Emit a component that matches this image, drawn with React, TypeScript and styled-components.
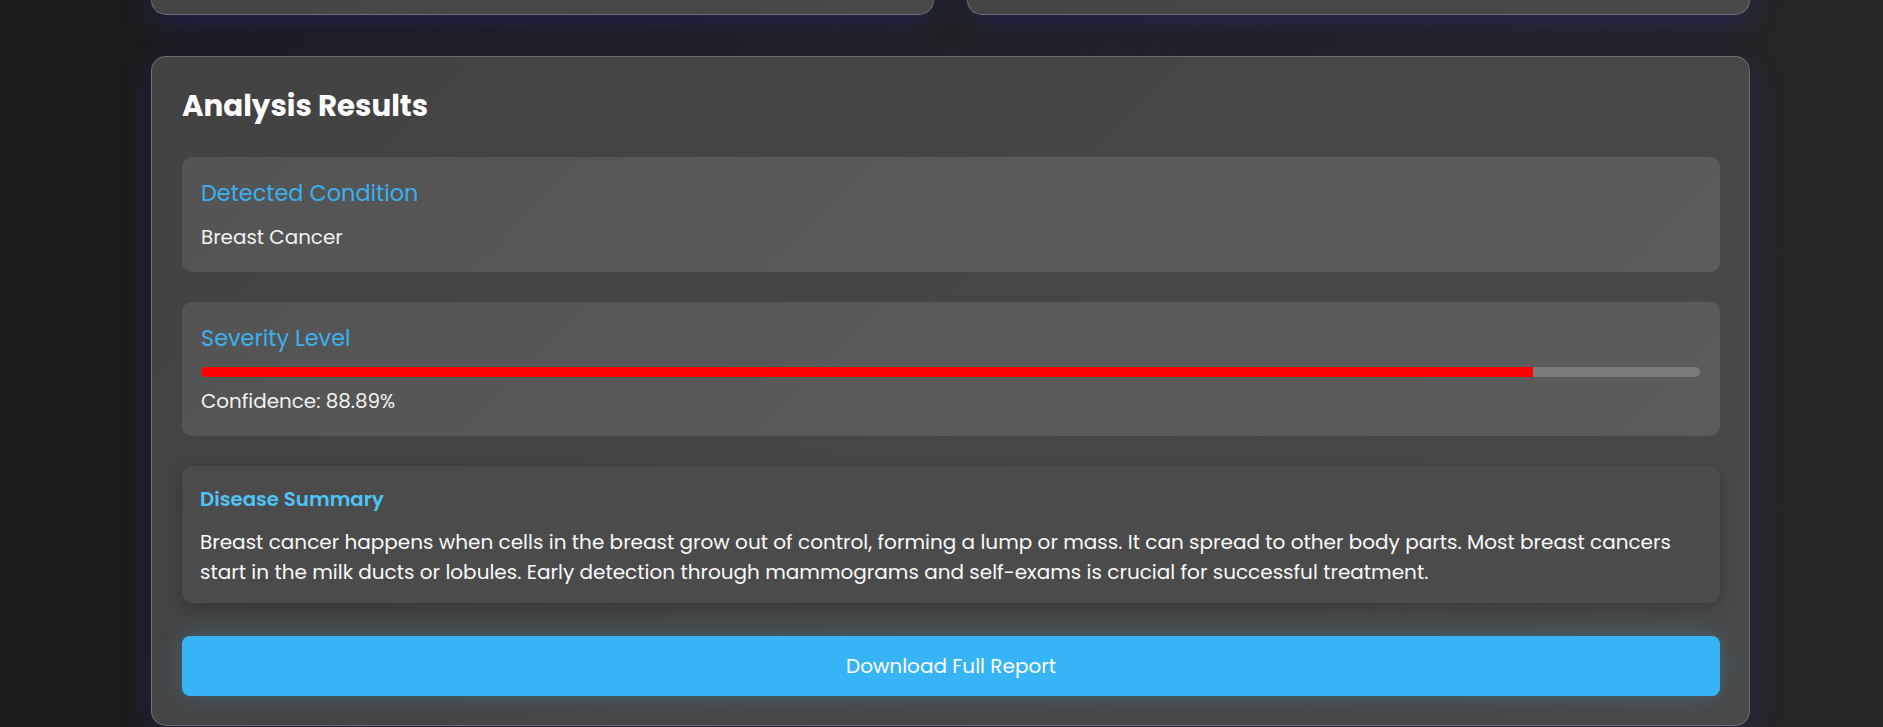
import React from "react";
import styled, { createGlobalStyle } from "styled-components";

const Global = createGlobalStyle`
  html, body {
    margin: 0;
    padding: 0;
  }
  body {
    min-height: 727px;
    background: linear-gradient(90deg, #1c1c1c 0%, #222 50%, #262626 100%);
    font-family: Poppins, "Open Sans", "Noto Sans", sans-serif;
    color: #fff;
    overflow: hidden;
  }
`;

const Page = styled.div`
  width: 1599px;
  margin-left: 151px;
  display: flex;
  flex-direction: column;
`;

const TopRow = styled.div`
  display: grid;
  grid-template-columns: 1fr 1fr;
  gap: 33px;
  margin-top: -285px;
`;

const GlassCard = styled.div`
  box-sizing: border-box;
  background: linear-gradient(135deg, #424242 0%, #474747 60%, #494949 100%);
  border: 1px solid rgba(255, 255, 255, 0.22);
  border-radius: 15px;
  box-shadow: 0 8px 32px 0 rgba(31, 38, 135, 0.4);
`;

const TopCard = styled(GlassCard)`
  height: 300px;
`;

const ResultsCard = styled(GlassCard)`
  margin-top: 41px;
  padding: 20px 29px 29px 30px;
  display: flex;
  flex-direction: column;
`;

const Title = styled.h2`
  margin: 9px 0 31px;
  font-size: 29.3px;
  font-weight: 700;
  line-height: 40px;
  color: #fff;
`;

const InfoBox = styled.div`
  box-sizing: border-box;
  background: linear-gradient(135deg, #545454 0%, #5a5a5a 60%, #5c5c5c 100%);
  border-radius: 10px;
  padding: 20px 20px 20px 19px;
  margin-bottom: 30px;
`;

const BoxHeading = styled.h3`
  margin: 0 0 13px;
  font-size: 22.4px;
  font-weight: 400;
  line-height: 32px;
  color: #3cb0ee;
`;

const BoxText = styled.p`
  margin: 0;
  font-size: 19.9px;
  line-height: 30px;
  color: #f2f2f2;
`;

const BarTrack = styled.div`
  height: 10px;
  border-radius: 5px;
  background: #7b7b7b;
  overflow: hidden;
  margin: 0 0 9px;
`;

const BarFill = styled.div`
  height: 100%;
  background: #ff0000;
`;

const SummaryBox = styled.div`
  box-sizing: border-box;
  background: #4b4b4b;
  border-radius: 10px;
  padding: 18px 18px 16px 18px;
  box-shadow: 0 4px 15px rgba(0, 0, 0, 0.22);
  margin-bottom: 33px;
`;

const SummaryHeading = styled.h4`
  margin: 0 0 13px;
  font-size: 19.8px;
  font-weight: 600;
  line-height: 30px;
  color: #4fc3f7;
`;

const SummaryText = styled.p`
  margin: 0;
  font-size: 20px;
  line-height: 30px;
  color: #fafafa;
`;

const DownloadButton = styled.button`
  height: 60px;
  border: none;
  border-radius: 8px;
  background: #36b4f5;
  color: #fff;
  font-family: inherit;
  font-size: 20px;
  cursor: pointer;
  box-shadow: 0 0 22px rgba(54, 180, 245, 0.28);
`;

const confidence = 88.89;

export default function App() {
  return (
    <>
      <Global />
      <Page>
        <TopRow>
          <TopCard />
          <TopCard />
        </TopRow>
        <ResultsCard>
          <Title>Analysis Results</Title>
          <InfoBox>
            <BoxHeading>Detected Condition</BoxHeading>
            <BoxText>Breast Cancer</BoxText>
          </InfoBox>
          <InfoBox>
            <BoxHeading>Severity Level</BoxHeading>
            <BarTrack>
              <BarFill style={{ width: `${confidence}%` }} />
            </BarTrack>
            <BoxText>Confidence: {confidence}%</BoxText>
          </InfoBox>
          <SummaryBox>
            <SummaryHeading>Disease Summary</SummaryHeading>
            <SummaryText>
              Breast cancer happens when cells in the breast grow out of control, forming a lump or mass. It can
              spread to other body parts. Most breast cancers start in the milk ducts or lobules. Early detection
              through mammograms and self-exams is crucial for successful treatment.
            </SummaryText>
          </SummaryBox>
          <DownloadButton>Download Full Report</DownloadButton>
        </ResultsCard>
      </Page>
    </>
  );
}
